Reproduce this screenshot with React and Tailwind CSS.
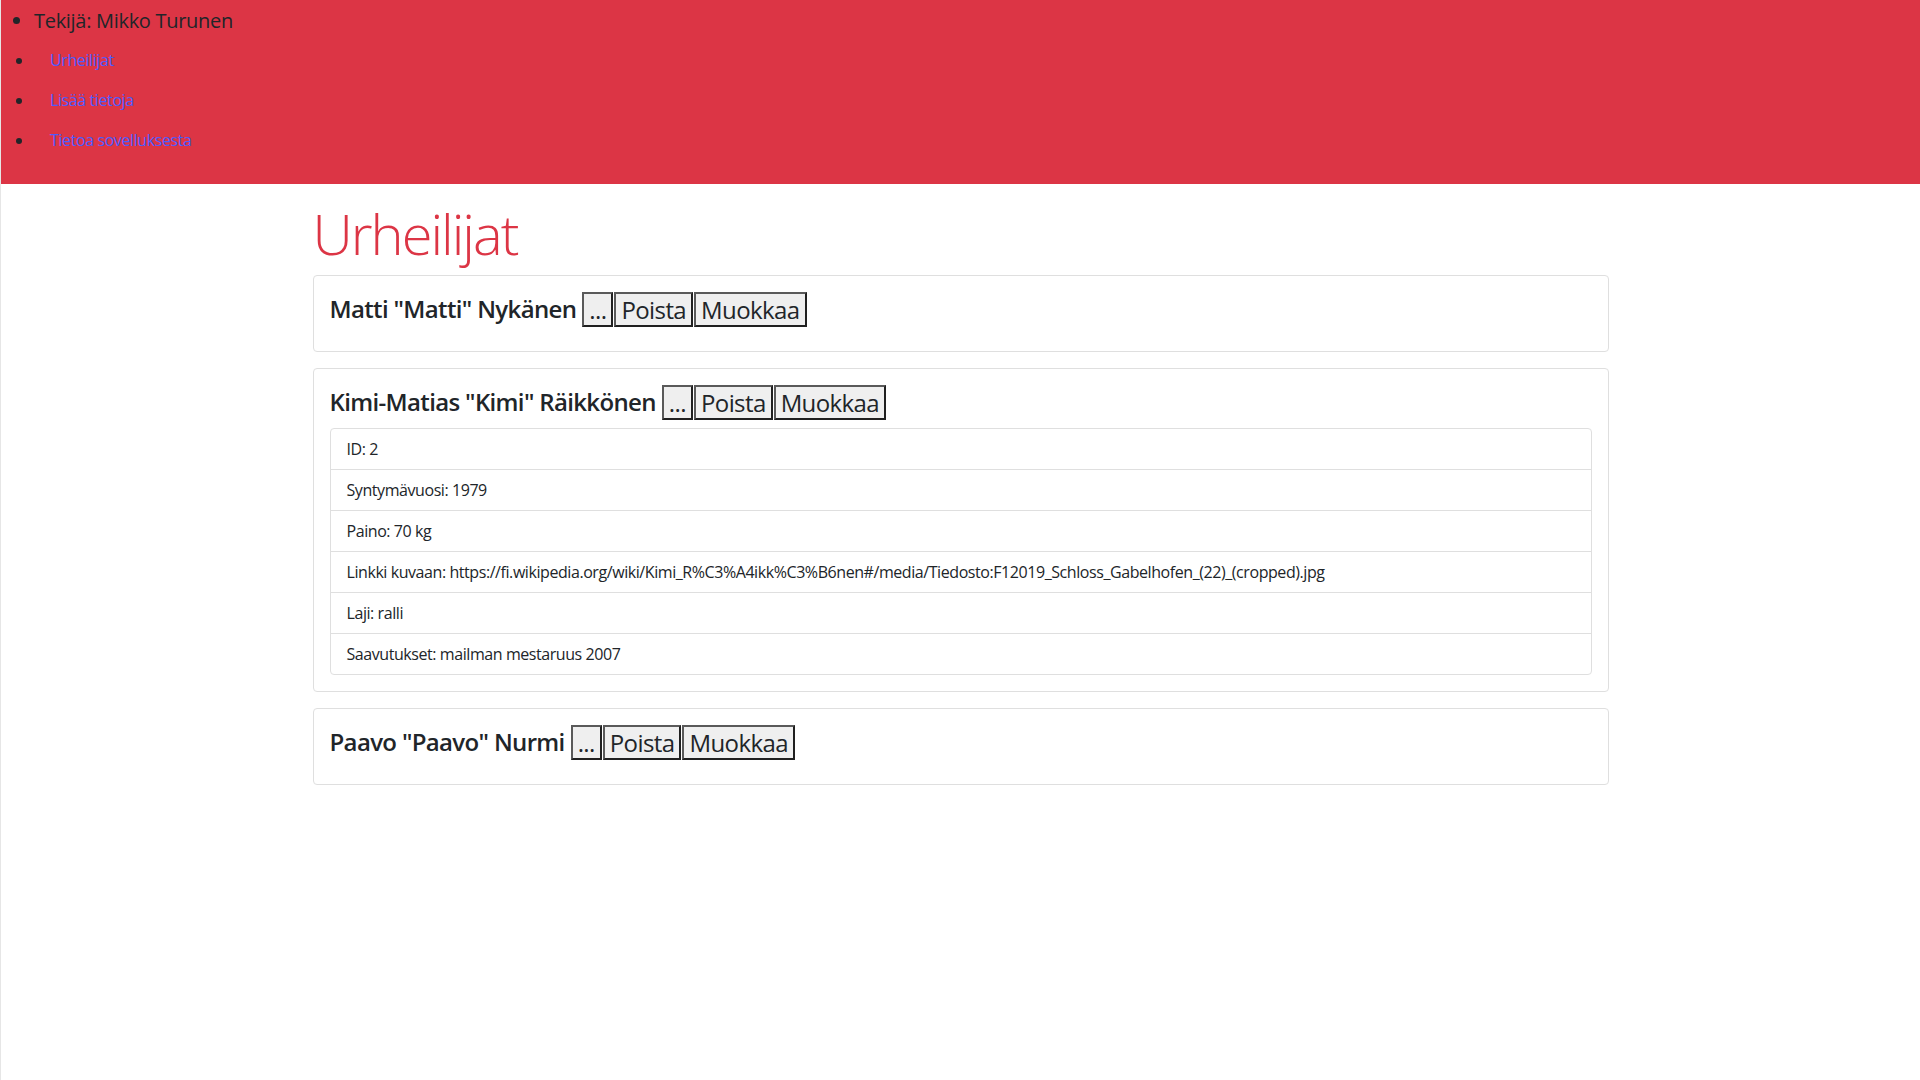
export default function App() {
  const athletes = [
    { name: 'Matti "Matti" Nykänen', open: false },
    {
      name: 'Kimi-Matias "Kimi" Räikkönen',
      open: true,
      details: [
        "ID: 2",
        "Syntymävuosi: 1979",
        "Paino: 70 kg",
        "Linkki kuvaan: https://fi.wikipedia.org/wiki/Kimi_R%C3%A4ikk%C3%B6nen#/media/Tiedosto:F12019_Schloss_Gabelhofen_(22)_(cropped).jpg",
        "Laji: ralli",
        "Saavutukset: mailman mestaruus 2007",
      ],
    },
    { name: 'Paavo "Paavo" Nurmi', open: false },
  ];

  return (
    <div className="min-h-screen bg-white border-l border-[#e6e6e6] font-['Open_Sans','Noto_Sans',sans-serif] text-[#212529]">
      <header className="h-[184px] bg-[#dc3545]">
        <ul className="list-disc pl-[33px]">
          <li className="pt-[2px] text-[20px] leading-[38px] tracking-[-0.3px]">Tekijä: Mikko Turunen</li>
          <li>
            <a href="#" className="block px-4 py-2 text-[16px] leading-6 tracking-[-0.4px] text-[#4d5cff]">
              Urheilijat
            </a>
          </li>
          <li>
            <a href="#" className="block px-4 py-2 text-[16px] leading-6 tracking-[-0.4px] text-[#4d5cff]">
              Lisää tietoja
            </a>
          </li>
          <li>
            <a href="#" className="block px-4 py-2 text-[16px] leading-6 tracking-[-0.4px] text-[#4d5cff]">
              Tietoa sovelluksesta
            </a>
          </li>
        </ul>
      </header>

      <main className="mx-auto max-w-[1320px] px-3 pt-4">
        <h1 className="mb-2 text-[56px] font-light leading-[1.2] tracking-[-2px] text-[#dc3545]">Urheilijat</h1>

        {athletes.map((a) => (
          <div key={a.name} className="mb-4 rounded-[4px] border border-[#dfdfdf] p-4">
            <h4 className="mb-2 flex items-center text-[24px] font-semibold leading-[1.2] tracking-[-0.65px]">
              <span>{a.name}</span>
              <span className="ml-[6px] flex gap-[1px]">
                <button className="border-2 border-[#5a5a5a] border-r-[#202020] border-b-[#202020] bg-[#efefef] px-[5px] py-[1px] text-[24px] font-normal leading-[29px] tracking-[-0.6px]">
                  ...
                </button>
                <button className="border-2 border-[#5a5a5a] border-r-[#202020] border-b-[#202020] bg-[#efefef] px-[5px] py-[1px] text-[24px] font-normal leading-[29px] tracking-[-0.6px]">
                  Poista
                </button>
                <button className="border-2 border-[#5a5a5a] border-r-[#202020] border-b-[#202020] bg-[#efefef] px-[5px] py-[1px] text-[24px] font-normal leading-[29px] tracking-[-0.6px]">
                  Muokkaa
                </button>
              </span>
            </h4>
            {a.open && (
              <ul className="rounded-[4px] border border-[#dfdfdf]">
                {a.details.map((d, i) => (
                  <li
                    key={d}
                    className={`px-4 py-2 text-[16px] leading-6 tracking-[-0.43px] ${i < a.details.length - 1 ? "border-b border-[#dfdfdf]" : ""}`}
                  >
                    {d}
                  </li>
                ))}
              </ul>
            )}
          </div>
        ))}
      </main>
    </div>
  );
}
